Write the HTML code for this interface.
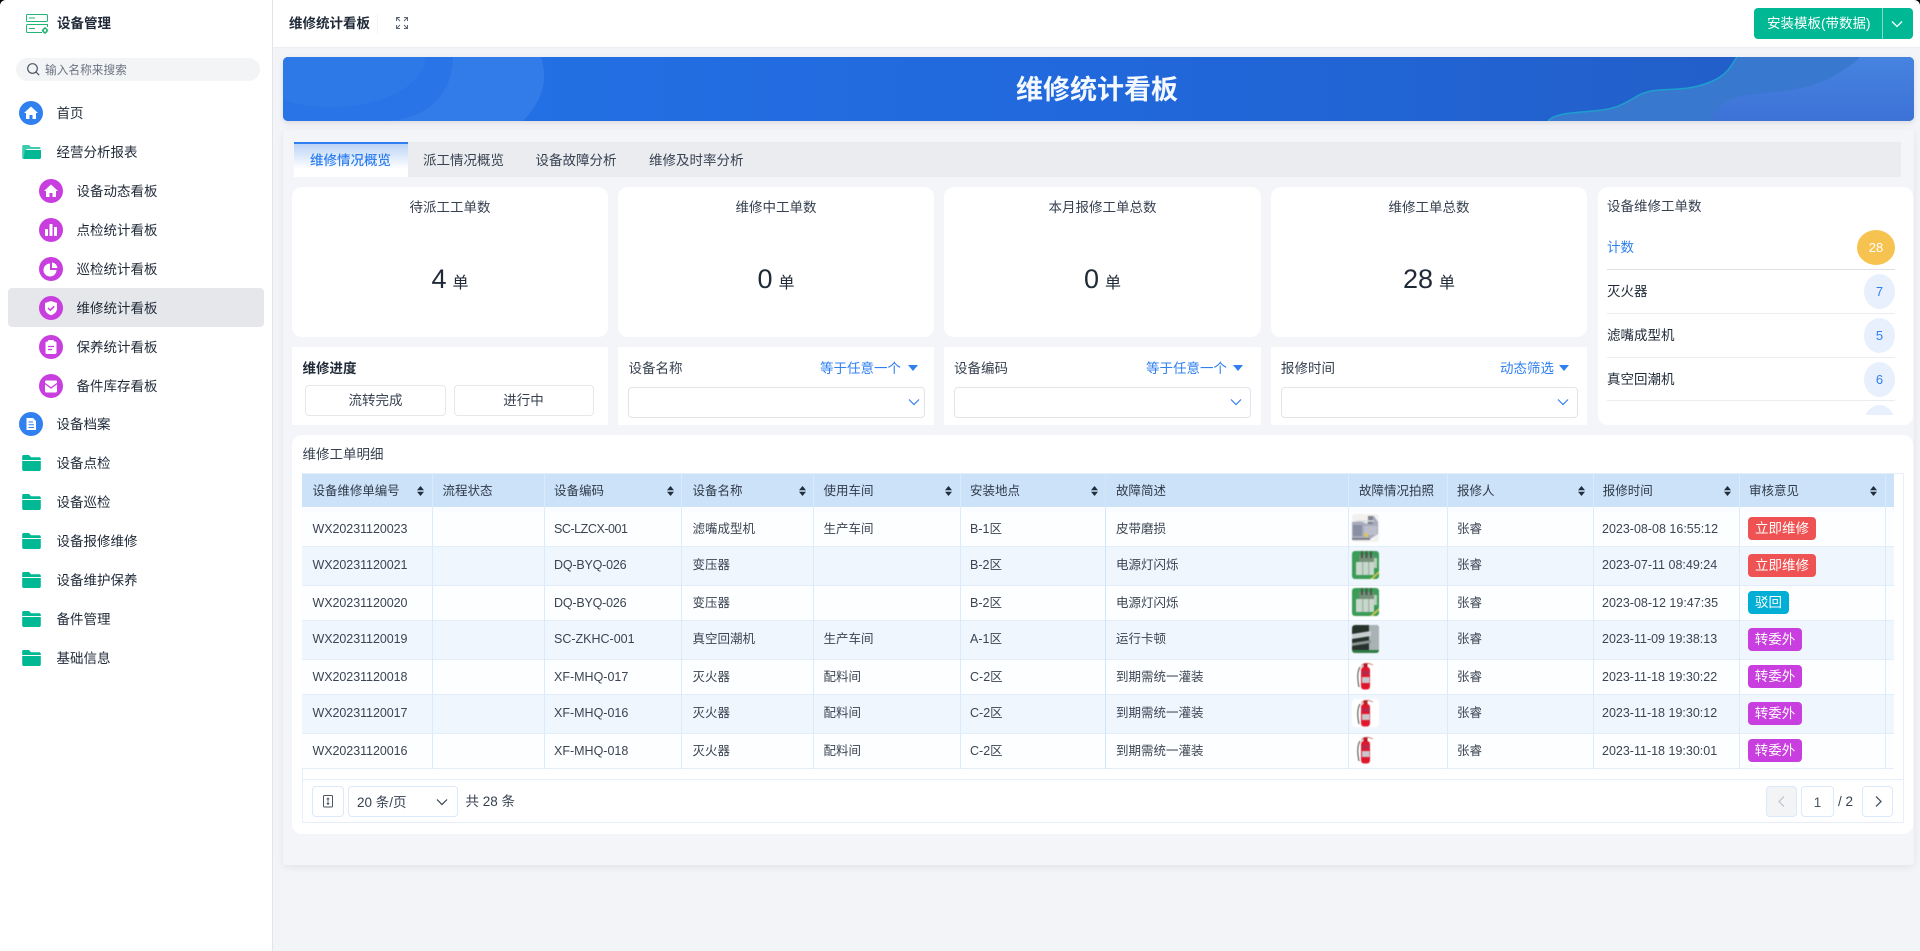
<!DOCTYPE html>
<html lang="zh-CN"><head><meta charset="utf-8"><title>维修统计看板</title>
<style>
*{box-sizing:border-box}
html,body{margin:0;padding:0;width:1920px;height:951px;overflow:hidden;background:#000}
body{font-family:"Liberation Sans","Noto Sans CJK SC",sans-serif;font-size:13.5px;color:#1f2937}
#app{position:absolute;left:0;top:0;width:1920px;height:951px;background:#f3f4f8;border-radius:6px 6px 0 0;overflow:hidden}
.a{position:absolute}
.t{position:absolute;white-space:nowrap}
.side{position:absolute;left:0;top:0;width:273px;height:951px;background:#fff;border-right:1px solid #e3e4e8}
.m{position:absolute;white-space:nowrap;height:24px;line-height:24px;font-size:13.5px;color:#1f2937;margin-top:1px;margin-left:-.5px}
.ic{position:absolute;width:24px;height:24px}
.fd{position:absolute;width:19px;height:16px}
.card{position:absolute;background:#fff}
.r10{border-radius:10px}
.ct{position:absolute;left:0;right:0;top:11px;text-align:center;line-height:20px;color:#374151}
.val{position:absolute;left:0;right:0;top:72px;height:40px;display:flex;justify-content:center;align-items:center;color:#1f2937}
.val b{font-weight:400;font-size:27px;margin-right:6px}
.val i{font-style:normal;font-size:16px;margin-top:4px}
.lb{position:absolute;top:12px;line-height:20px;color:#374151}
.blue{position:absolute;top:12px;line-height:20px;color:#2f7ff0;white-space:nowrap}
.tri{position:absolute;top:18px;width:0;height:0;border-left:5.5px solid transparent;border-right:5.5px solid transparent;border-top:6.5px solid #2f7ff0}
.sel{position:absolute;height:31px;top:40px;border:1px solid #e2e4e9;border-radius:4px;background:#fff}
.btn{position:absolute;top:38px;height:31px;border:1px solid #e5e7eb;border-radius:4px;text-align:center;line-height:29px;color:#374151}
.li{position:absolute;left:1607px;white-space:nowrap;line-height:20px;color:#1f2937}
.bd{position:absolute;left:1864px;width:31px;height:35px;border-radius:50%;background:#e8f0fd;color:#2f7ff0;text-align:center;line-height:35px;font-size:13px}
.ln{position:absolute;left:1607px;width:288px;height:1px;background:#eaecf0}
.r{position:absolute;left:302px;width:1592px;border-bottom:1px solid #e3eefb;font-size:12.5px;color:#3b4452}
.r span,.h span{position:absolute;white-space:nowrap;top:0}
.e{background:#eff6fe}
.o{background:#fdfeff}
.h{position:absolute;left:302px;top:474px;width:1592px;height:33px;background:#cbe2f9;line-height:34px;font-size:12.5px;color:#2f3a48}
.c1{left:10.5px;letter-spacing:-.06px}.c2{left:140.5px}.c3{left:252px}.c4{left:390.5px}.c5{left:521.5px}.c6{left:668px}.c7{left:814px}.c8{left:1057px}.c9{left:1155px}.c10{left:1300px}.c11{left:1447px}
.vl{position:absolute;top:474px;height:295px;width:1px;background:#dcebfb}
.so{position:absolute;top:12px;width:7px;height:10px}
.img{position:absolute;left:1050px;width:27px;height:28px;border-radius:3px;overflow:hidden;filter:blur(.6px)}
.tag{position:absolute;left:1446px;height:23px;line-height:23px;border-radius:4px;color:#fff;font-size:13.5px;text-align:center;font-weight:400}
.pb{position:absolute;top:786px;height:31px;border:1px solid #dbe9fb;border-radius:4px;background:#fff}
</style></head><body>
<svg width="0" height="0" style="position:absolute">
<defs>
<symbol id="folder" viewBox="0 0 19 16"><path d="M1.5 0H7l2 2.2h8.2c.9 0 1.6.7 1.6 1.6V5H.2V1.3C.2.6.8 0 1.5 0Z" fill="#00b894"/><path d="M.2 6H18.8v8.4c0 .9-.7 1.6-1.6 1.6H1.8C.9 16 .2 15.300 .2 14.400Z" fill="#00b894"/></symbol>
<symbol id="sort" viewBox="0 0 7 10"><path d="M3.500 0 7 4.200H0Z M3.500 10 0 5.800H7Z" fill="#1f2d3d"/></symbol>
<symbol id="m1" viewBox="0 0 27 28"><rect width="27" height="28" fill="#f3f1ee"/><path d="M0 8 9 7 15 10 17 3 22 2 26 8V20L18 25 0 26Z" fill="#a7abbb"/><rect x="1" y="11" width="9" height="11" fill="#8a8fa3"/><rect x="12" y="12" width="13" height="9" fill="#bcbfcb"/><rect x="16" y="2" width="5" height="8" fill="#7f8390"/><path d="M5 7H22" stroke="#d9dade" stroke-width="1.500"/><rect x="12" y="19" width="4" height="4" fill="#d8c46a"/><rect x="0" y="24" width="18" height="2" fill="#7c7f8a"/></symbol>
<symbol id="m2" viewBox="0 0 27 28"><rect width="27" height="28" fill="#3a9c56"/><rect x="4" y="11" width="18" height="13" fill="#c9d8cd"/><rect x="10" y="11" width="1.500" height="13" fill="#a3b8a9"/><rect x="16" y="11" width="1.500" height="13" fill="#a3b8a9"/><rect x="7" y="4" width="15" height="7" fill="#76907a"/><rect x="9" y="0" width="2" height="7" fill="#46584a"/><rect x="13.500" y="0" width="2" height="7" fill="#46584a"/><rect x="18" y="0" width="2" height="7" fill="#46584a"/><rect x="22" y="7" width="3" height="10" fill="#b9d0bb"/><path d="M18 28 27 20V22L21 28Z" fill="#d8c84a"/></symbol>
<symbol id="m3" viewBox="0 0 27 28"><rect width="27" height="28" fill="#26332c"/><rect x="17" y="0" width="10" height="26" fill="#a9b3b5"/><path d="M0 9 19 6V11L0 14Z" fill="#c9cfd0"/><path d="M0 18 19 15V18L0 21Z" fill="#8a9494"/><rect x="0" y="25" width="27" height="3" fill="#2f7d45"/></symbol>
<symbol id="m4" viewBox="0 0 27 28"><rect width="27" height="28" fill="#fff"/><path d="M10 5C9 2 13 1 17 1.500L21 3" fill="none" stroke="#c9746e" stroke-width=".9"/><path d="M8 5C5 10 5.500 18 7 25" fill="none" stroke="#444" stroke-width="1"/><rect x="9" y="5" width="9" height="22.500" rx="3" fill="#e0172c"/><rect x="11.500" y="1.500" width="4" height="4" fill="#b51a26"/><rect x="10" y="15" width="7.500" height="6" fill="#c9c9cd"/><rect x="10" y="9" width="7.500" height="3.500" fill="#b42a4c"/></symbol>
<symbol id="chev" viewBox="0 0 12 8"><path d="M1 1.500 6 6.500 11 1.500" fill="none" stroke="#2f7ff0" stroke-width="1.200"/></symbol>
</defs>
</svg>
<div id="app">

<!-- main top bar -->
<div class="a" style="left:273px;top:0;width:1647px;height:48px;background:#fff;border-bottom:1px solid #eceef3"></div>
<div class="t" style="left:289px;top:14px;line-height:20px;font-weight:700;color:#1f2937;font-size:13.5px">维修统计看板</div>
<div class="a" style="left:377px;top:14px;width:1px;height:20px;background:#f3f4f6"></div>
<svg class="a" style="left:396px;top:17px" width="12" height="12" viewBox="0 0 12 12" fill="none" stroke="#5b6472" stroke-width="1"><path d="M.5 4V.5H4M8 .5H11.500V4M11.500 8V11.500H8M4 11.500H.5V8M.8 .8 4 4M11.200 .8 8 4M11.200 11.200 8 8M.8 11.200 4 8"/></svg>

<div class="a" style="left:1754px;top:8px;width:159px;height:31px;background:#00b894;border-radius:4px"></div>
<div class="a" style="left:1882px;top:8px;width:1px;height:31px;background:#7fdcc8"></div>
<div class="t" style="left:1767px;top:14px;line-height:20px;color:#fff">安装模板(带数据)</div>
<svg class="a" style="left:1891px;top:20px" width="12" height="8" viewBox="0 0 12 8"><path d="M1 1.500 6 6.500 11 1.500" fill="none" stroke="#fff" stroke-width="1.300"/></svg>

<!-- sidebar -->
<div class="side"></div>
<svg class="a" style="left:26px;top:14px" width="23" height="20" viewBox="0 0 23 20" fill="none" stroke="#22b573" stroke-width="1"><rect x=".5" y=".5" width="21" height="7" rx="1"/><path d="M3 4H9"/><path d="M16 18.500H1.500a1 1 0 0 1-1-1V11.500a1 1 0 0 1 1-1H21.500V13"/><path d="M3 14.500H9"/><circle cx="19" cy="16.500" r="2" stroke-width="1.600"/><path d="M19 13V14M19 19V20M15.800 16.500H16.800M21.200 16.500H22.200" stroke-width="1.200"/></svg>
<div class="t" style="left:57px;top:14px;line-height:20px;font-weight:700;font-size:13.5px;color:#1f2937">设备管理</div>
<div class="a" style="left:16px;top:58px;width:244px;height:23px;background:#f3f4f6;border-radius:12px"></div>
<svg class="a" style="left:27px;top:63px" width="13" height="13" viewBox="0 0 13 13" fill="none" stroke="#4b5563" stroke-width="1.200"><circle cx="5.500" cy="5.500" r="4.800"/><path d="M9 9 12.200 12.200"/></svg>
<div class="t" style="left:45px;top:60.500px;line-height:20px;font-size:11.700px;color:#6b7280">输入名称来搜索</div>

<svg class="ic" style="left:19px;top:101px" viewBox="0 0 24 24"><circle cx="12" cy="12" r="12" fill="#3180f0"/><path d="M12 5.500 19 12H17V18H13.500V14H10.500V18H7V12H5Z" fill="#fff"/></svg>
<div class="m" style="left:57px;top:101px">首页</div>
<svg class="a" style="left:22px;top:145px" width="19" height="14" viewBox="0 0 19 14"><path d="M1.500 0H7L9 2H17.200C18 2 18.500 2.600 18.500 3.400V4H4.500L2.500 14H1.500C.7 14 .2 13.300 .2 12.500V1.300C.2 .6 .8 0 1.500 0Z" fill="#00b894" fill-opacity=".75"/><path d="M3 5H19V12.500C19 13.400 18.300 14 17.500 14H1.500Z" fill="#00b894"/></svg>
<div class="m" style="left:57px;top:140px">经营分析报表</div>

<div class="a" style="left:8px;top:288px;width:256px;height:39px;background:#e5e7eb;border-radius:4px"></div>

<svg class="ic" style="left:39px;top:179px" viewBox="0 0 24 24"><circle cx="12" cy="12" r="12" fill="#c93ede"/><path d="M12 5.500 19 12H17V18H13.500V14H10.500V18H7V12H5Z" fill="#fff"/></svg>
<div class="m" style="left:77px;top:179px">设备动态看板</div>
<svg class="ic" style="left:39px;top:218px" viewBox="0 0 24 24"><circle cx="12" cy="12" r="12" fill="#c93ede"/><rect x="6" y="11" width="3" height="7" rx=".5" fill="#fff"/><rect x="10.500" y="6" width="3" height="12" rx=".5" fill="#fff"/><rect x="15" y="9" width="3" height="9" rx=".5" fill="#fff"/></svg>
<div class="m" style="left:77px;top:218px">点检统计看板</div>
<svg class="ic" style="left:39px;top:257px" viewBox="0 0 24 24"><circle cx="12" cy="12" r="12" fill="#c93ede"/><path d="M11 6.500V13H17.500A6.500 6.500 0 1 1 11 6.500Z" fill="#fff"/><path d="M13 5.500A6 6 0 0 1 18.500 11H13Z" fill="#fff"/></svg>
<div class="m" style="left:77px;top:257px">巡检统计看板</div>
<svg class="ic" style="left:39px;top:296px" viewBox="0 0 24 24"><circle cx="12" cy="12" r="12" fill="#c93ede"/><path d="M12 5 18 7V12.500C18 16 15 18.300 12 19.300 9 18.300 6 16 6 12.500V7Z" fill="#fff"/><path d="M9 12 11.300 14.200 15.200 10.300" fill="none" stroke="#c93ede" stroke-width="1.500"/></svg>
<div class="m" style="left:77px;top:296px">维修统计看板</div>
<svg class="ic" style="left:39px;top:335px" viewBox="0 0 24 24"><circle cx="12" cy="12" r="12" fill="#c93ede"/><rect x="6.500" y="6.500" width="11" height="12.500" rx="1.500" fill="#fff"/><rect x="9" y="5" width="6" height="3" rx="1" fill="#fff"/><path d="M9 11.500H15M9 14.500H13" stroke="#c93ede" stroke-width="1.200"/></svg>
<div class="m" style="left:77px;top:335px">保养统计看板</div>
<svg class="ic" style="left:39px;top:374px" viewBox="0 0 24 24"><circle cx="12" cy="12" r="12" fill="#c93ede"/><path d="M7 6.500H17A1 1 0 0 1 18 7.500V17A1.500 1.500 0 0 1 16.500 18.500H7.500A1.500 1.500 0 0 1 6 17V7.500A1 1 0 0 1 7 6.500Z" fill="#fff"/><path d="M6 9.500 12 14 18 9.500" fill="none" stroke="#c93ede" stroke-width="1.400"/></svg>
<div class="m" style="left:77px;top:374px">备件库存看板</div>

<svg class="ic" style="left:19px;top:412px" viewBox="0 0 24 24"><circle cx="12" cy="12" r="12" fill="#3180f0"/><path d="M7.500 6H14L17 9V18H7.500Z" fill="#fff"/><path d="M9.500 10H14M9.500 12.800H15M9.500 15.500H15" stroke="#3180f0" stroke-width="1"/></svg>
<div class="m" style="left:57px;top:412px">设备档案</div>
<svg class="fd" style="left:22px;top:455px"><use href="#folder"/></svg>
<div class="m" style="left:57px;top:451px">设备点检</div>
<svg class="fd" style="left:22px;top:494px"><use href="#folder"/></svg>
<div class="m" style="left:57px;top:490px">设备巡检</div>
<svg class="fd" style="left:22px;top:533px"><use href="#folder"/></svg>
<div class="m" style="left:57px;top:529px">设备报修维修</div>
<svg class="fd" style="left:22px;top:572px"><use href="#folder"/></svg>
<div class="m" style="left:57px;top:568px">设备维护保养</div>
<svg class="fd" style="left:22px;top:611px"><use href="#folder"/></svg>
<div class="m" style="left:57px;top:607px">备件管理</div>
<svg class="fd" style="left:22px;top:650px"><use href="#folder"/></svg>
<div class="m" style="left:57px;top:646px">基础信息</div>

<!-- banner -->
<svg class="a" style="left:282.500px;top:57px;border-radius:5px;box-shadow:0 2px 6px rgba(0,0,0,.1)" width="1631" height="64" viewBox="0 0 1631 64">
<defs><linearGradient id="bg" x1="0" x2="1" y1="0" y2="0"><stop offset="0" stop-color="#2273e6"/><stop offset=".5" stop-color="#2168dc"/><stop offset="1" stop-color="#225cc4"/></linearGradient>
<linearGradient id="w2" x1="0" x2="0" y1="0" y2="1"><stop offset="0" stop-color="#4683e0"/><stop offset="1" stop-color="#3d72d6"/></linearGradient></defs>
<rect width="1631" height="64" fill="url(#bg)"/>
<path d="M0 0H258C266 25 258 45 240 64H0Z" fill="#327ce9"/>
<path d="M0 0H142C142 30 95 50 48 50 25 50 8 46 0 42Z" fill="#2e79e8"/>
<path d="M0 42C8 46 25 50 48 50 95 50 142 30 142 0H170C170 40 140 64 100 64H0Z" fill="#2975e7"/>
<path d="M1265 64C1272 56 1290 56 1310 54 1335 52 1340 47 1356 38 1368 32 1380 33 1395 32 1415 31 1436 24 1445 13 1449 8 1451 4 1454 0H1631V64Z" fill="#3978cf"/>
<path d="M1265 64C1272 56 1290 56 1310 54 1335 52 1340 47 1356 38 1368 32 1380 33 1395 32 1415 31 1436 24 1445 13 1449 8 1451 4 1454 0" fill="none" stroke="#1e9fcf" stroke-width="1.500"/>
<path d="M1429 64C1432 48 1442 42 1465 38 1490 35 1520 34 1545 22 1558 15 1568 9 1577 0H1631V64Z" fill="url(#w2)"/>
</svg>
<div class="t" style="left:1016px;top:70px;line-height:40px;font-size:27px;font-weight:700;color:#f4f8ff">维修统计看板</div>

<!-- outer panel -->
<div class="a" style="left:282.500px;top:130px;width:1631px;height:735px;background:#f4f5f9;box-shadow:0 2px 8px rgba(0,0,0,.07);border-radius:4px"></div>

<!-- tabs -->
<div class="a" style="left:294px;top:142px;width:1607px;height:35px;background:#ebecf0"></div>
<div class="a" style="left:294px;top:142px;width:113.500px;height:35px;background:linear-gradient(#bcd4f6 0,#fff 75%);border-top:2.500px solid #2f7ff0"></div>
<div class="t" style="left:310px;top:151px;line-height:20px;color:#2f7ff0;font-weight:500">维修情况概览</div>
<div class="t" style="left:423px;top:151px;line-height:20px;color:#374151">派工情况概览</div>
<div class="t" style="left:535.500px;top:151px;line-height:20px;color:#374151">设备故障分析</div>
<div class="t" style="left:649px;top:151px;line-height:20px;color:#374151">维修及时率分析</div>

<!-- stat cards -->
<div class="card r10" style="left:292px;top:187px;width:316px;height:150px"><div class="ct">待派工工单数</div><div class="val"><b>4</b><i>单</i></div></div>
<div class="card r10" style="left:618px;top:187px;width:316px;height:150px"><div class="ct">维修中工单数</div><div class="val"><b>0</b><i>单</i></div></div>
<div class="card r10" style="left:944px;top:187px;width:317px;height:150px"><div class="ct">本月报修工单总数</div><div class="val"><b>0</b><i>单</i></div></div>
<div class="card r10" style="left:1271px;top:187px;width:316px;height:150px"><div class="ct">维修工单总数</div><div class="val"><b>28</b><i>单</i></div></div>

<!-- filter cards -->
<div class="card" style="left:292px;top:347px;width:316px;height:78px">
<div class="lb" style="left:10.500px;font-weight:700;color:#1f2937">维修进度</div>
<div class="btn" style="left:13px;width:141px">流转完成</div>
<div class="btn" style="left:161.500px;width:140px">进行中</div>
</div>
<div class="card" style="left:618px;top:347px;width:316px;height:78px">
<div class="lb" style="left:10.500px">设备名称</div>
<div class="blue" style="left:202px">等于任意一个</div><div class="tri" style="left:289.500px"></div>
<div class="sel" style="left:10px;width:297px"><svg class="a" style="left:279px;top:10px" width="12" height="8"><use href="#chev"/></svg></div>
</div>
<div class="card" style="left:944px;top:347px;width:317px;height:78px">
<div class="lb" style="left:10px">设备编码</div>
<div class="blue" style="left:202px">等于任意一个</div><div class="tri" style="left:289px"></div>
<div class="sel" style="left:10px;width:297px"><svg class="a" style="left:275px;top:10px" width="12" height="8"><use href="#chev"/></svg></div>
</div>
<div class="card" style="left:1271px;top:347px;width:316px;height:78px">
<div class="lb" style="left:10px">报修时间</div>
<div class="blue" style="left:229px">动态筛选</div><div class="tri" style="left:288px"></div>
<div class="sel" style="left:9.500px;width:297px"><svg class="a" style="left:275px;top:10px" width="12" height="8"><use href="#chev"/></svg></div>
</div>

<!-- right list card -->
<div class="card r10" style="left:1597.500px;top:187px;width:315px;height:238px"></div>
<div class="li" style="top:197px;color:#374151">设备维修工单数</div>
<div class="li" style="top:238px;color:#2f7ff0">计数</div>
<div class="bd" style="left:1857px;width:38px;top:230px;background:#f6c350;color:#fff">28</div>
<div class="a" style="left:1607px;top:269px;width:288px;height:1px;background:#dcdfe4"></div>
<div class="li" style="top:282px">灭火器</div><div class="bd" style="top:274px">7</div><div class="ln" style="top:313px"></div>
<div class="li" style="top:326px">滤嘴成型机</div><div class="bd" style="top:318px">5</div><div class="ln" style="top:357px"></div>
<div class="li" style="top:370px">真空回潮机</div><div class="bd" style="top:362px">6</div><div class="ln" style="top:400px"></div>
<div class="a" style="left:1864px;top:405px;width:31px;height:10px;overflow:hidden"><div style="width:31px;height:35px;border-radius:50%;background:#e8f0fd"></div></div>

<!-- table card -->
<div class="card r10" style="left:292px;top:435px;width:1621px;height:399px"></div>
<div class="t" style="left:302.500px;top:445px;line-height:20px;color:#374151">维修工单明细</div>
<div class="a" style="left:301.500px;top:473px;width:1602px;height:350px;border:1px solid #e5eefa"></div>

<div class="a" style="left:302px;top:507px;width:1592px;height:5px;background:#fafcff"></div>
<div class="h">
<span class="c1">设备维修单编号</span><svg class="so" style="left:115px"><use href="#sort"/></svg>
<span class="c2">流程状态</span>
<span class="c3">设备编码</span><svg class="so" style="left:365px"><use href="#sort"/></svg>
<span class="c4">设备名称</span><svg class="so" style="left:497px"><use href="#sort"/></svg>
<span class="c5">使用车间</span><svg class="so" style="left:642.500px"><use href="#sort"/></svg>
<span class="c6">安装地点</span><svg class="so" style="left:789px"><use href="#sort"/></svg>
<span class="c7">故障简述</span>
<span class="c8">故障情况拍照</span>
<span class="c9">报修人</span><svg class="so" style="left:1275.500px"><use href="#sort"/></svg>
<span class="c10" style="left:1300.700px">报修时间</span><svg class="so" style="left:1421.500px"><use href="#sort"/></svg>
<span class="c11">审核意见</span><svg class="so" style="left:1567.500px"><use href="#sort"/></svg>
</div>

<div class="r o" style="top:511.500px;height:35.500px;line-height:34px"><span class="c1">WX20231120023</span><span class="c3" style="letter-spacing:-.45px">SC-LZCX-001</span><span class="c4">滤嘴成型机</span><span class="c5">生产车间</span><span class="c6">B-1区</span><span class="c7">皮带磨损</span><svg class="img" style="top:2.500px"><use href="#m1"/></svg><span class="c9">张睿</span><span class="c10">2023-08-08 16:55:12</span><div class="tag" style="top:5.500px;width:68px;background:#ee5253">立即维修</div></div>
<div class="r e" style="top:547px;height:38.500px;line-height:37px"><span class="c1">WX20231120021</span><span class="c3" style="letter-spacing:-.2px">DQ-BYQ-026</span><span class="c4">变压器</span><span class="c6">B-2区</span><span class="c7">电源灯闪烁</span><svg class="img" style="top:4px"><use href="#m2"/></svg><span class="c9">张睿</span><span class="c10">2023-07-11 08:49:24</span><div class="tag" style="top:7px;width:68px;background:#ee5253">立即维修</div></div>
<div class="r o" style="top:585.500px;height:35.500px;line-height:34px"><span class="c1">WX20231120020</span><span class="c3" style="letter-spacing:-.2px">DQ-BYQ-026</span><span class="c4">变压器</span><span class="c6">B-2区</span><span class="c7">电源灯闪烁</span><svg class="img" style="top:2.500px"><use href="#m2"/></svg><span class="c9">张睿</span><span class="c10">2023-08-12 19:47:35</span><div class="tag" style="top:5.500px;width:41px;background:#00aed6">驳回</div></div>
<div class="r e" style="top:621px;height:38.700px;line-height:37px"><span class="c1">WX20231120019</span><span class="c3">SC-ZKHC-001</span><span class="c4">真空回潮机</span><span class="c5">生产车间</span><span class="c6">A-1区</span><span class="c7">运行卡顿</span><svg class="img" style="top:4px"><use href="#m3"/></svg><span class="c9">张睿</span><span class="c10">2023-11-09 19:38:13</span><div class="tag" style="top:7px;width:54px;background:#c93ede">转委外</div></div>
<div class="r o" style="top:659.700px;height:35.300px;line-height:34px"><span class="c1">WX20231120018</span><span class="c3">XF-MHQ-017</span><span class="c4">灭火器</span><span class="c5">配料间</span><span class="c6">C-2区</span><span class="c7">到期需统一灌装</span><svg class="img" style="top:2px"><use href="#m4"/></svg><span class="c9">张睿</span><span class="c10">2023-11-18 19:30:22</span><div class="tag" style="top:5.300px;width:54px;background:#c93ede">转委外</div></div>
<div class="r e" style="top:695px;height:38.700px;line-height:37px"><span class="c1">WX20231120017</span><span class="c3">XF-MHQ-016</span><span class="c4">灭火器</span><span class="c5">配料间</span><span class="c6">C-2区</span><span class="c7">到期需统一灌装</span><svg class="img" style="top:4px"><use href="#m4"/></svg><span class="c9">张睿</span><span class="c10">2023-11-18 19:30:12</span><div class="tag" style="top:7px;width:54px;background:#c93ede">转委外</div></div>
<div class="r o" style="top:733.700px;height:35.600px;line-height:34px"><span class="c1">WX20231120016</span><span class="c3">XF-MHQ-018</span><span class="c4">灭火器</span><span class="c5">配料间</span><span class="c6">C-2区</span><span class="c7">到期需统一灌装</span><svg class="img" style="top:2.500px"><use href="#m4"/></svg><span class="c9">张睿</span><span class="c10">2023-11-18 19:30:01</span><div class="tag" style="top:5.500px;width:54px;background:#c93ede">转委外</div></div>

<div class="vl" style="left:431.500px"></div><div class="vl" style="left:543.500px"></div><div class="vl" style="left:681px"></div><div class="vl" style="left:813px"></div><div class="vl" style="left:959.500px"></div><div class="vl" style="left:1105px;background:#d2e5fa"></div><div class="vl" style="left:1348px"></div><div class="vl" style="left:1446.500px"></div><div class="vl" style="left:1592.500px"></div><div class="vl" style="left:1738.500px"></div><div class="vl" style="left:1884.500px"></div>

<!-- pagination -->
<div class="a" style="left:302px;top:779px;width:1601px;height:1px;background:#e5eefa"></div>
<div class="pb" style="left:312px;width:32px"><svg class="a" style="left:9px;top:8px" width="12" height="13" viewBox="0 0 12 13" fill="none" stroke="#4b5563" stroke-width="1"><rect x="1.500" y=".5" width="9" height="11.500" rx="1"/><path d="M6 3V9.500M4.700 4.300 6 3 7.300 4.300M4.700 8.200 6 9.500 7.300 8.200" stroke-width=".9"/></svg></div>
<div class="pb" style="left:348px;width:109.500px"><span class="t" style="left:8px;top:6px;line-height:20px;color:#374151">20 条/页</span><svg class="a" style="left:87px;top:11px" width="12" height="8" viewBox="0 0 12 8"><path d="M1 1.500 6 6.500 11 1.500" fill="none" stroke="#374151" stroke-width="1.200"/></svg></div>
<div class="t" style="left:465.500px;top:792px;line-height:20px;color:#374151">共 28 条</div>
<div class="pb" style="left:1766px;width:31px;background:#f3f4f6"><svg class="a" style="left:10px;top:8px" width="9" height="13" viewBox="0 0 9 13"><path d="M7 1.500 2 6.500 7 11.500" fill="none" stroke="#c3c7ce" stroke-width="1.300"/></svg></div>
<div class="pb" style="left:1801px;width:33px;text-align:center;line-height:31px;color:#4b5563">1</div>
<div class="t" style="left:1838px;top:792px;line-height:20px;color:#374151">/ 2</div>
<div class="pb" style="left:1862px;width:31px"><svg class="a" style="left:11px;top:8px" width="9" height="13" viewBox="0 0 9 13"><path d="M2 1.500 7 6.500 2 11.500" fill="none" stroke="#4b5563" stroke-width="1.300"/></svg></div>

</div>
</body></html>
